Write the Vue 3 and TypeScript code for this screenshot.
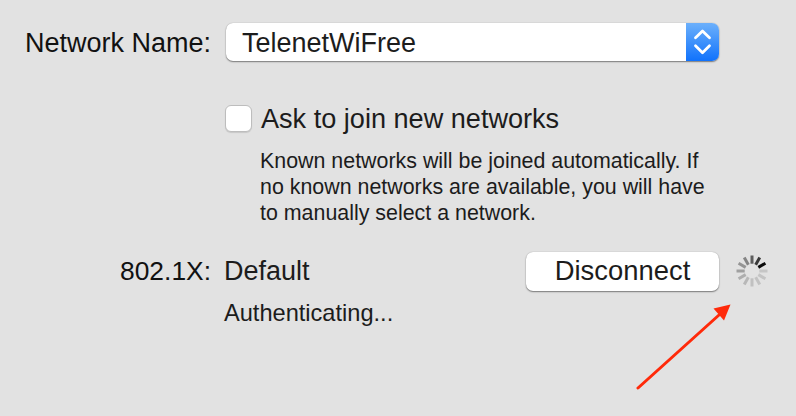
<script setup lang="ts">
const spokes = Array.from({ length: 12 }, (_, i) => {
  const order = (i + 12 - 2) % 12
  const shades = ['#0a0a0a', '#c6c6c6', '#c4c4c4', '#c2c2c2', '#c0c0c0', '#b8b8b8', '#aeaeae', '#a0a0a0', '#949494', '#848484', '#5e5e5e', '#3a3a3a']
  return { angle: i * 30, color: shades[order] }
})
</script>

<template>
  <main class="pane">
    <div class="label">Network Name:</div>
    <div class="select">
      <span class="select-value">TelenetWiFree</span>
      <span class="stepper">
        <svg width="33" height="38" viewBox="0 0 33 38" fill="none" stroke="#fff" stroke-width="2.8" stroke-linecap="round" stroke-linejoin="round">
          <path d="M9.5 14.7 16.5 8 23.5 14.7" />
          <path d="M9.5 22.7 16.5 29.7 23.5 22.7" />
        </svg>
      </span>
    </div>

    <div class="check-row">
      <span class="checkbox"></span>
      <span class="check-label">Ask to join new networks</span>
    </div>
    <p class="help">Known networks will be joined automatically. If<br />no known networks are available, you will have<br />to manually select a network.</p>

    <div class="label auth-label">802.1X:</div>
    <div class="auth-row">
      <span class="auth-value">Default</span>
      <button class="disconnect" type="button">Disconnect</button>
      <svg class="spinner" width="34" height="34" viewBox="0 0 34 34">
        <line v-for="s in spokes" :key="s.angle" x1="17" y1="1.5" x2="17" y2="9.7" :stroke="s.color" stroke-width="3" stroke-linecap="butt" :transform="`rotate(${s.angle} 17 17)`" />
      </svg>
    </div>
    <div class="status">Authenticating...</div>

    <svg class="arrow" width="100" height="90" viewBox="0 0 100 90">
      <line x1="2" y1="86" x2="83" y2="13" stroke="#ff2a0a" stroke-width="3" stroke-linecap="round" />
      <polygon points="94.5,2.5 77.5,6.5 88,18.5" fill="#ff2a0a" />
    </svg>
  </main>
</template>

<style>
body { margin: 0; background: #e2e2e2; }
</style>

<style scoped>
.pane {
  position: relative;
  box-sizing: border-box;
  width: 796px;
  height: 416px;
  overflow: hidden;
  padding-top: 23px;
  background: #e2e2e2;
  color: #1c1c1c;
  font-family: "Liberation Sans", Arial, sans-serif;
  font-size: 27px;
  display: grid;
  grid-template-columns: 211px 495px;
  grid-template-rows: 38px auto auto auto auto;
  column-gap: 13px;
  align-content: start;
}
.label {
  text-align: right;
  line-height: 40px;
  color: #111;
}
.select {
  grid-column: 2;
  margin-left: 2px;
  height: 38px;
  display: flex;
  border-radius: 7px;
  overflow: hidden;
  background: #fff;
  box-shadow: 0 1px 1.5px rgba(0, 0, 0, 0.45), 0 0 1px rgba(0, 0, 0, 0.3);
}
.select-value {
  flex: 1;
  padding-left: 16px;
  line-height: 40px;
}
.stepper {
  width: 33px;
  height: 38px;
  background: linear-gradient(#6cb0fb, #1072fc);
}
.stepper svg { display: block; }
.check-row {
  grid-column: 2;
  margin-top: 44px;
  margin-left: 1px;
  display: flex;
  align-items: center;
  gap: 9px;
  height: 27px;
}
.checkbox {
  box-sizing: border-box;
  width: 27px;
  height: 27px;
  border-radius: 6px;
  background: #fff;
  border: 1px solid #bdbdbd;
  box-shadow: 0 1px 1px rgba(0, 0, 0, 0.12);
}
.check-label {
  line-height: 29px;
  font-size: 27.1px;
}
.help {
  grid-column: 2;
  margin: 16px 0 0 36px;
  font-size: 21.4px;
  line-height: 26px;
}
.auth-label {
  grid-column: 1;
  margin-top: 25px;
  line-height: 40px;
  font-size: 26.4px;
}
.auth-row {
  grid-column: 2;
  margin-top: 25px;
  margin-left: 1px;
  height: 40px;
  display: flex;
  align-items: center;
  position: relative;
}
.auth-value {
  flex: 1;
  margin-left: -1px;
}
.disconnect {
  box-sizing: border-box;
  width: 193px;
  height: 39px;
  padding: 0;
  border: none;
  border-radius: 7px;
  background: #fff;
  color: #1c1c1c;
  font: inherit;
  font-size: 27.4px;
  box-shadow: 0 1px 1.5px rgba(0, 0, 0, 0.45), 0 0 1px rgba(0, 0, 0, 0.3);
}
.spinner {
  position: absolute;
  left: 510px;
  top: 3px;
}
.status {
  grid-column: 2;
  margin-top: 9px;
  font-size: 23.6px;
  line-height: 26px;
}
.arrow {
  position: absolute;
  left: 636px;
  top: 302px;
}
</style>
